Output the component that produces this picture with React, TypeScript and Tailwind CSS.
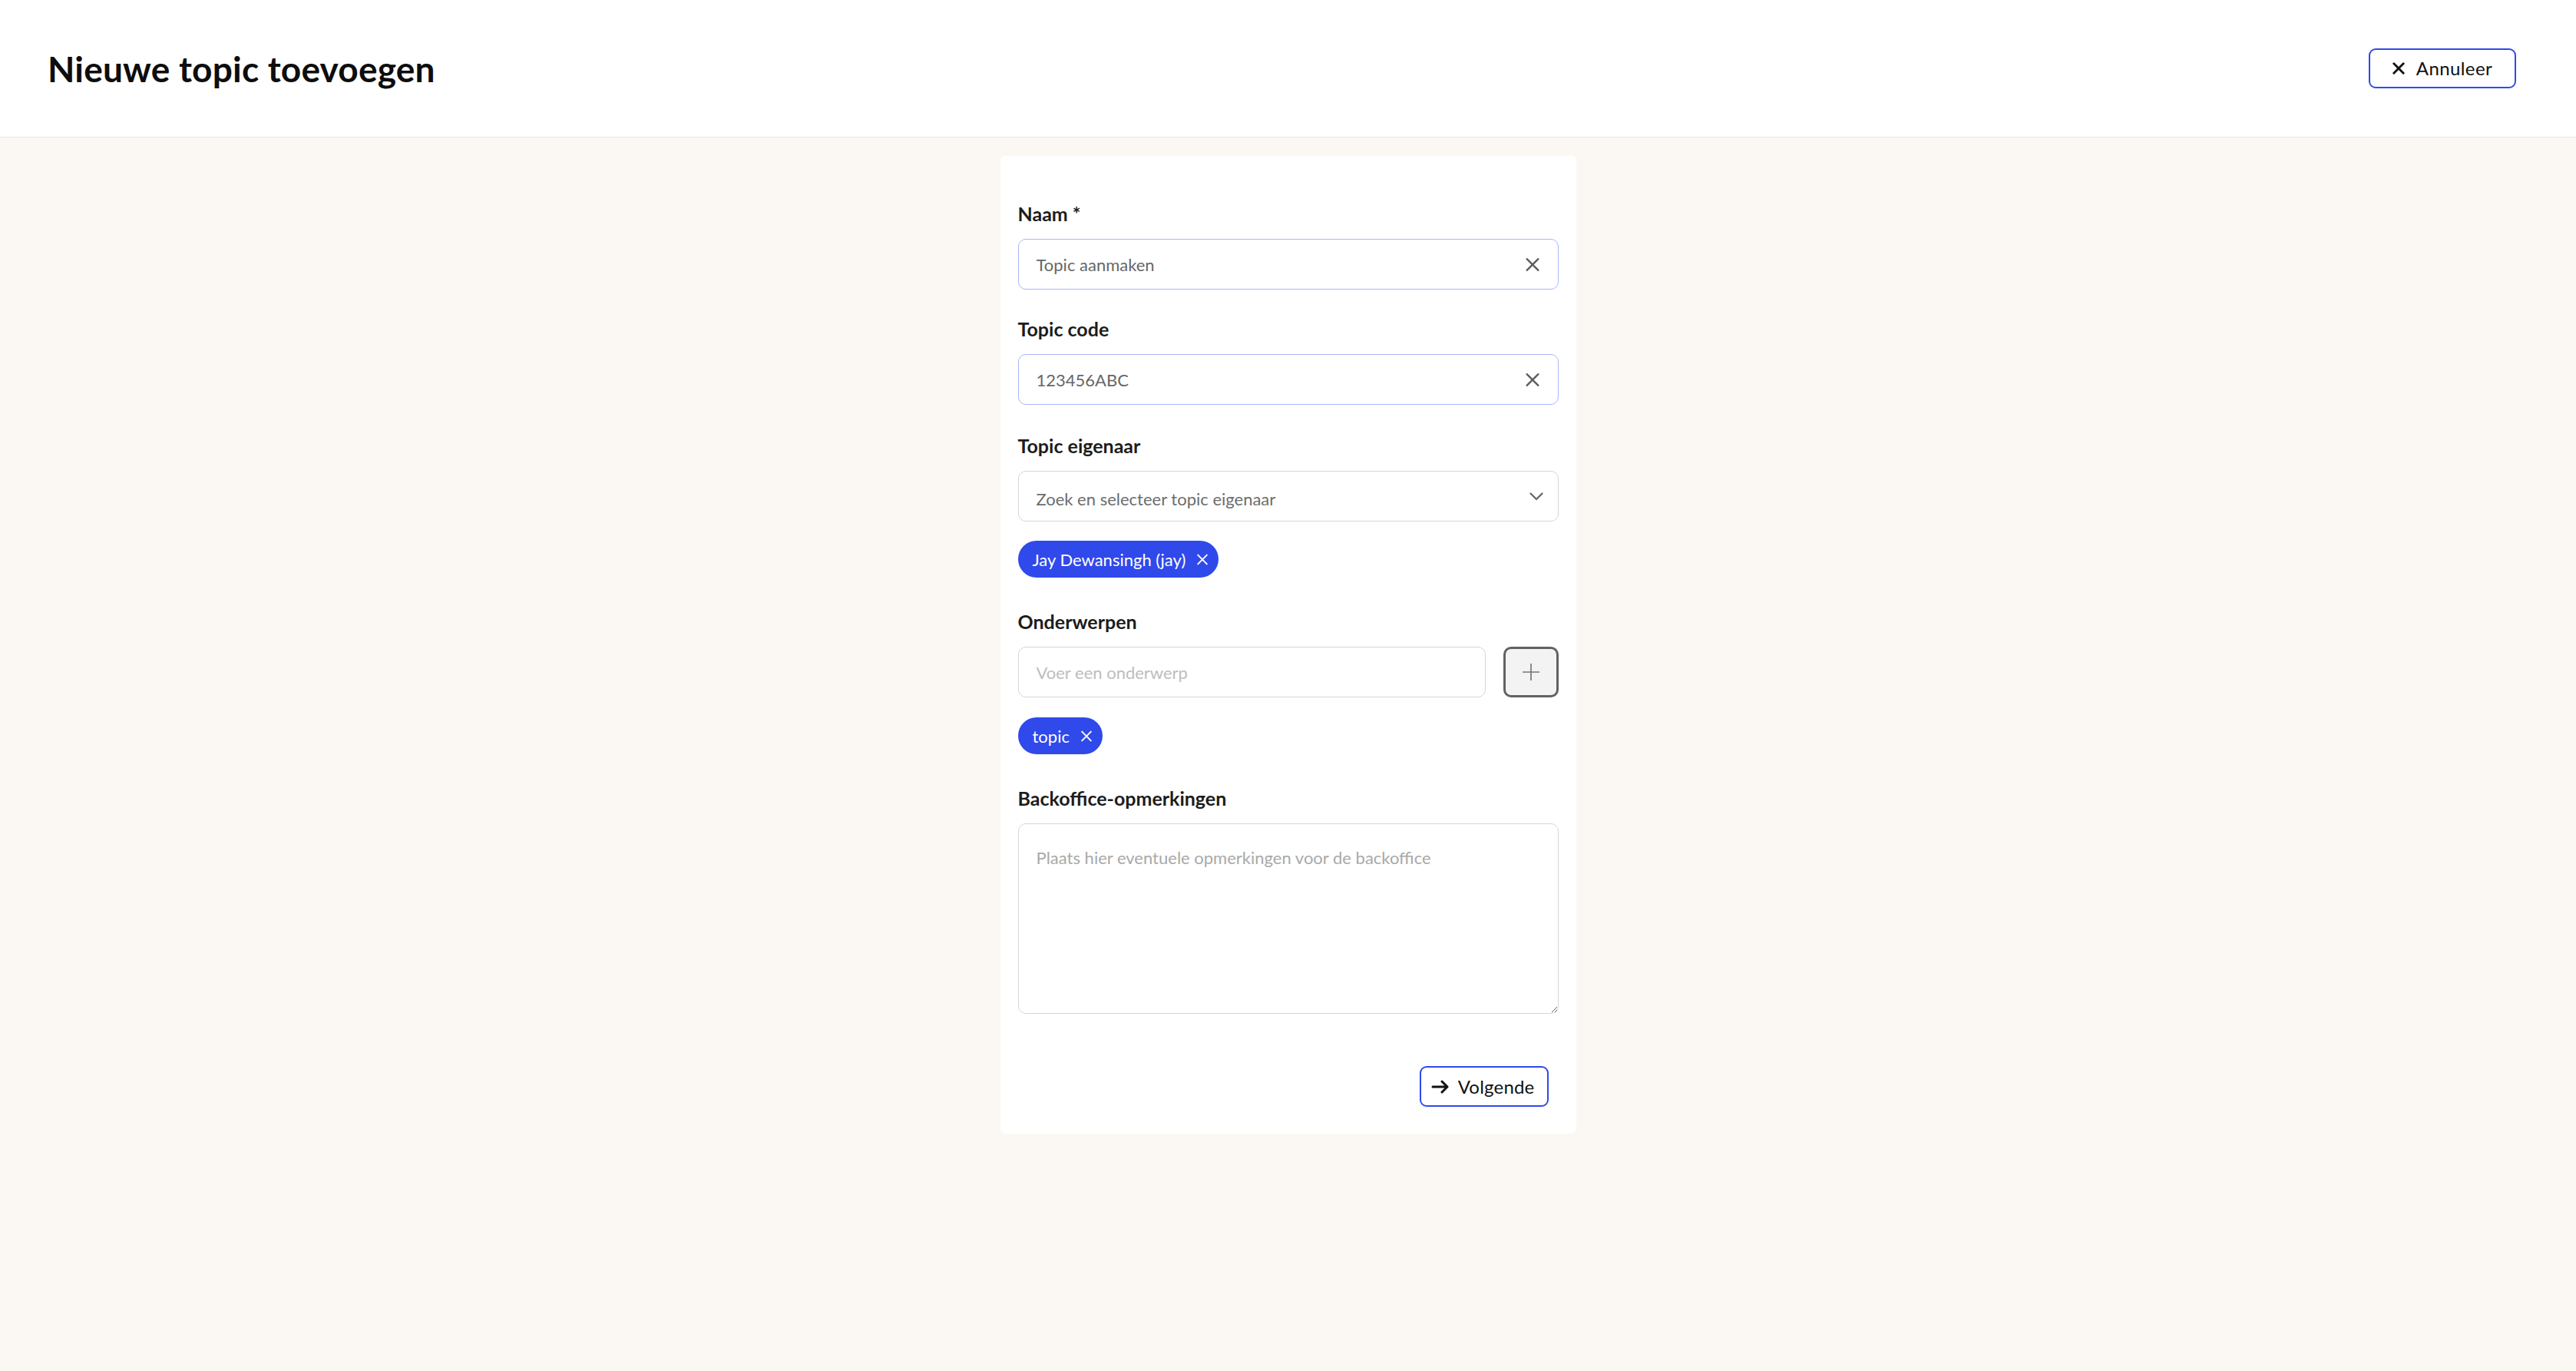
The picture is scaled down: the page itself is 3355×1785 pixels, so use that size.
import React from "react";

function XIcon({ className = "", stroke = 2 }: { className?: string; stroke?: number }) {
  return (
    <svg viewBox="0 0 18 18" className={className} fill="none" stroke="currentColor" strokeWidth={stroke} strokeLinecap="round">
      <path d="M2 2L16 16M16 2L2 16" />
    </svg>
  );
}

function Label({ children }: { children: React.ReactNode }) {
  return <div className="text-[25px] leading-[36px] font-bold text-[#1c1c1c] mb-[15px]">{children}</div>;
}

function Chip({ text }: { text: string }) {
  return (
    <div className="inline-flex items-center h-[48px] rounded-full bg-[#3049eb] pl-[19px] pr-[13px] gap-[14px] text-white text-[22px]">
      <span>{text}</span>
      <XIcon className="w-[16px] h-[15px]" stroke={2.4} />
    </div>
  );
}

export default function App() {
  return (
    <div className="min-h-screen bg-[#fbf8f3] font-[Lato,sans-serif]">
      <header className="h-[179px] bg-white border-b border-[#e7e5e2] flex items-center justify-between pl-[62px] pr-[78px]">
        <h1 className="text-[46px] font-bold text-[#0d0d0d] tracking-[0.2px]">Nieuwe topic toevoegen</h1>
        <button className="h-[52px] w-[192px] border-[2.5px] border-[#2f4ae8] rounded-[9px] flex items-center justify-center gap-[15px] text-[24px] text-[#111] bg-white">
          <XIcon className="w-[16px] h-[16px]" stroke={3.2} />
          <span className="tracking-[0.4px]">Annuleer</span>
        </button>
      </header>

      <main className="flex justify-center pt-[24px]">
        <div className="w-[750px] bg-white rounded-[6px] px-[23px] pt-[57px] pb-[35px] flex flex-col">
          <Label>Naam *</Label>
          <div className="h-[66px] border border-[#a9b5f7] rounded-[10px] pl-[23px] pr-[23px] flex items-center">
            <input
              readOnly
              defaultValue="Topic aanmaken"
              className="flex-1 bg-transparent outline-none text-[22px] text-[#676767]"
            />
            <XIcon className="w-[20px] h-[19px] text-[#5a5a5a]" stroke={2.1} />
          </div>

          <div className="mt-[33px]">
            <Label>Topic code</Label>
          </div>
          <div className="h-[66px] border border-[#a9b5f7] rounded-[10px] pl-[23px] pr-[23px] flex items-center">
            <input
              readOnly
              defaultValue="123456ABC"
              className="flex-1 bg-transparent outline-none text-[22px] text-[#676767]"
            />
            <XIcon className="w-[20px] h-[19px] text-[#5a5a5a]" stroke={2.1} />
          </div>

          <div className="mt-[35px]">
            <Label>Topic eigenaar</Label>
          </div>
          <div className="h-[66px] border border-[#d6d6d6] rounded-[10px] pl-[23px] pr-[19px] flex items-center justify-between">
            <span className="text-[22px] text-[#6d6d6d] pt-[6px]">Zoek en selecteer topic eigenaar</span>
            <svg viewBox="0 0 18 11" className="w-[18px] h-[11px] text-[#666]" fill="none" stroke="currentColor" strokeWidth={2.3} strokeLinecap="round" strokeLinejoin="round">
              <path d="M1.5 1.5L9 9L16.5 1.5" />
            </svg>
          </div>
          <div className="mt-[25px]">
            <Chip text="Jay Dewansingh (jay)" />
          </div>

          <div className="mt-[39px]">
            <Label>Onderwerpen</Label>
          </div>
          <div className="flex gap-[23px]">
            <input
              placeholder="Voer een onderwerp"
              className="flex-1 h-[66px] border border-[#d6d6d6] rounded-[10px] px-[23px] text-[22px] outline-none placeholder:text-[#bdbdbd]"
            />
            <button className="w-[72px] h-[66px] border-[3px] border-[#626262] rounded-[10px] bg-[#f3f3f3] flex items-center justify-center">
              <svg viewBox="0 0 22 22" className="w-[22px] h-[22px] text-[#777]" fill="none" stroke="currentColor" strokeWidth={1.7}>
                <path d="M11 0V22M0 11H22" />
              </svg>
            </button>
          </div>
          <div className="mt-[26px]">
            <Chip text="topic" />
          </div>

          <div className="mt-[39px]">
            <Label>Backoffice-opmerkingen</Label>
          </div>
          <textarea
            placeholder="Plaats hier eventuele opmerkingen voor de backoffice"
            className="h-[248px] border border-[#d6d6d6] rounded-[10px] px-[23px] pt-[27px] text-[22px] leading-[33px] outline-none placeholder:text-[#a9a9a9]"
          />

          <div className="flex justify-end mt-[68px] mr-[13px]">
            <button className="h-[53px] border-[2.5px] border-[#2f4ae8] rounded-[9px] flex items-center gap-[11px] pl-[13px] pr-[16px] text-[24px] text-[#111] bg-white">
              <svg viewBox="0 0 24 18" className="w-[24px] h-[18px]" fill="none" stroke="currentColor" strokeWidth={3} strokeLinecap="round" strokeLinejoin="round">
                <path d="M2 9H21M14 2L21 9L14 16" />
              </svg>
              <span className="tracking-[0.2px]">Volgende</span>
            </button>
          </div>
        </div>
      </main>
    </div>
  );
}
